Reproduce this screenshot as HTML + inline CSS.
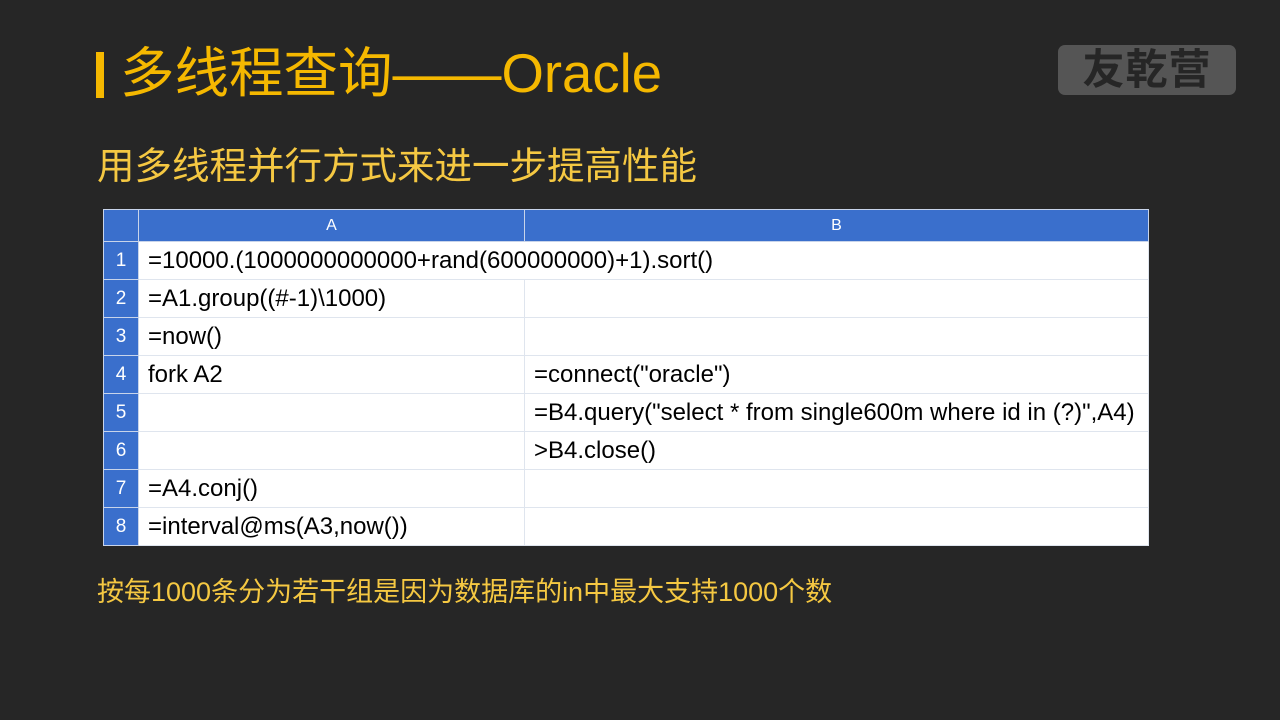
<!DOCTYPE html>
<html><head><meta charset="utf-8"><style>
body{margin:0;width:1280px;height:720px;background:#262626;position:relative;overflow:hidden;font-family:"Liberation Sans","Noto Sans CJK SC",sans-serif}
.bar{position:absolute;left:96px;top:52px;width:8px;height:46px;background:#f5b800}
.t{position:absolute;left:120px;top:42px;font-size:54.5px;color:#f5b800;line-height:64px;white-space:nowrap}
.s{position:absolute;left:97px;top:141px;font-size:37.5px;color:#f5c842;line-height:50px;white-space:nowrap}
.n{position:absolute;left:97px;top:572px;font-size:27px;color:#f5c842;line-height:40px;white-space:nowrap}
.logo{position:absolute;left:1058px;top:45px;width:178px;height:50px;background:#555;border-radius:7px;color:#262626;font-size:42px;font-weight:bold;text-align:center;line-height:50px;letter-spacing:1px}
table{position:absolute;left:103px;top:209px;border-collapse:collapse;border:1px solid #c8d0e0}
td{border:1px solid #dfe5ee;padding:0 0 0 9px;font-size:24px;color:#000;background:#fff;height:37px;white-space:nowrap}
tr.h td{background:#3a6fcc;color:#fff;text-align:center;font-size:16px;height:31px;padding:0;border-color:#c8d4ea}
td.r{background:#3a6fcc;color:#fff;text-align:center;font-size:19px;padding:0;width:34px;border-color:#c8d4ea}
</style></head><body>
<div class="bar"></div>
<div class="t">多线程查询——Oracle</div>
<div class="logo">友乾营</div>
<div class="s">用多线程并行方式来进一步提高性能</div>
<table>
<tr class="h"><td style="width:34px"></td><td style="width:385px">A</td><td style="width:623px">B</td></tr>
<tr><td class="r">1</td><td colspan="2">=10000.(1000000000000+rand(600000000)+1).sort()</td></tr>
<tr><td class="r">2</td><td>=A1.group((#-1)\1000)</td><td></td></tr>
<tr><td class="r">3</td><td>=now()</td><td></td></tr>
<tr><td class="r">4</td><td>fork A2</td><td>=connect("oracle")</td></tr>
<tr><td class="r">5</td><td></td><td>=B4.query("select * from single600m where id in (?)",A4)</td></tr>
<tr><td class="r">6</td><td></td><td>&gt;B4.close()</td></tr>
<tr><td class="r">7</td><td>=A4.conj()</td><td></td></tr>
<tr><td class="r">8</td><td>=interval@ms(A3,now())</td><td></td></tr>
</table>
<div class="n">按每1000条分为若干组是因为数据库的in中最大支持1000个数</div>
</body></html>
